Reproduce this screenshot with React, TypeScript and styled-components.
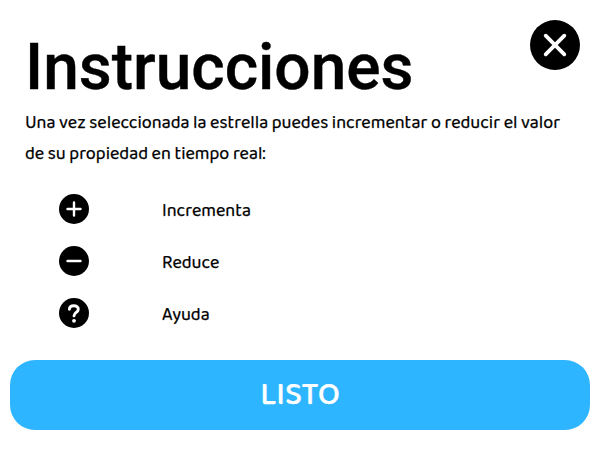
import React from "react";
import styled, { createGlobalStyle } from "styled-components";

const GlobalStyle = createGlobalStyle`
  * { box-sizing: border-box; }
  body {
    margin: 0;
    background: #fff;
    color: #000;
    font-family: "Baloo 2", "Noto Sans", sans-serif;
  }
`;

const Dialog = styled.main`
  width: 600px;
  height: 450px;
  padding: 20px 10px;
  display: flex;
  flex-direction: column;
  overflow: hidden;
`;

const Header = styled.header`
  height: 88px;
  padding: 0 10px 0 15px;
  display: flex;
  justify-content: space-between;
  align-items: flex-start;
`;

const Title = styled.h1`
  margin: 10px 0 0;
  font: 500 64px/75px Roboto, sans-serif;
  -webkit-text-stroke: 0.4px #000;
  white-space: nowrap;
`;

const CloseButton = styled.button`
  width: 50px;
  height: 50px;
  padding: 0;
  border: 0;
  background: none;
  svg { display: block; }
`;

const Intro = styled.p`
  margin: 0 0 13px 15px;
  font-size: 18px;
  font-weight: 400;
  line-height: 31px;
  -webkit-text-stroke: 0.25px #000;
  white-space: nowrap;
`;

const Line = styled.span`
  display: block;
`;

const Actions = styled.ul`
  margin: 0;
  padding: 0;
  list-style: none;
`;

const Action = styled.li`
  height: 52px;
  padding-left: 49px;
  display: grid;
  grid-template-columns: 103px 1fr;
  align-items: center;
  svg { display: block; }
`;

const ActionLabel = styled.span`
  padding-top: 3px;
  font-size: 18px;
  font-weight: 400;
  line-height: 22px;
  -webkit-text-stroke: 0.25px #000;
`;

const DoneButton = styled.button`
  width: 100%;
  height: 70px;
  margin-top: 21px;
  padding: 2px 0 0;
  border: 0;
  border-radius: 25px;
  background: #2db5ff;
  color: #fff;
  font: 500 32px/68px "Baloo 2", "Noto Sans", sans-serif;
  -webkit-text-stroke: 0.25px #fff;
`;

const Glyph = ({ children }: { children: React.ReactNode }) => (
  <svg width="30" height="30" viewBox="0 0 30 30" fill="none" stroke="#fff" strokeWidth="2.4" strokeLinecap="round" strokeLinejoin="round">
    <circle cx="15" cy="15" r="15" fill="#000" stroke="none" />
    {children}
  </svg>
);

const actions = [
  { label: "Incrementa", icon: <path d="M15 8.5v13M8.5 15h13" /> },
  { label: "Reduce", icon: <path d="M8.5 15h13" /> },
  {
    label: "Ayuda",
    icon: (
      <>
        <path strokeWidth="2.9" d="M10.4 11.2c.1-2.1 1.9-3.5 4.4-3.5 2.7 0 4.5 1.5 4.5 3.5 0 3.3-4.3 3.2-4.3 6.7" />
        <circle cx="15" cy="22.8" r="1.9" fill="#fff" stroke="none" />
      </>
    ),
  },
];

export default function App() {
  return (
    <>
      <GlobalStyle />
      <Dialog>
        <Header>
          <Title>Instrucciones</Title>
          <CloseButton aria-label="Cerrar">
            <svg width="50" height="50" viewBox="0 0 50 50">
              <circle cx="25" cy="25" r="25" />
              <path d="M15.7 15.7l18.6 18.6M34.3 15.7L15.7 34.3" stroke="#fff" strokeWidth="3.8" strokeLinecap="round" />
            </svg>
          </CloseButton>
        </Header>
        <Intro>
          <Line>Una vez seleccionada la estrella puedes incrementar o reducir el valor</Line>
          <Line>de su propiedad en tiempo real:</Line>
        </Intro>
        <Actions>
          {actions.map((a) => (
            <Action key={a.label}>
              <Glyph>{a.icon}</Glyph>
              <ActionLabel>{a.label}</ActionLabel>
            </Action>
          ))}
        </Actions>
        <DoneButton>LISTO</DoneButton>
      </Dialog>
    </>
  );
}
